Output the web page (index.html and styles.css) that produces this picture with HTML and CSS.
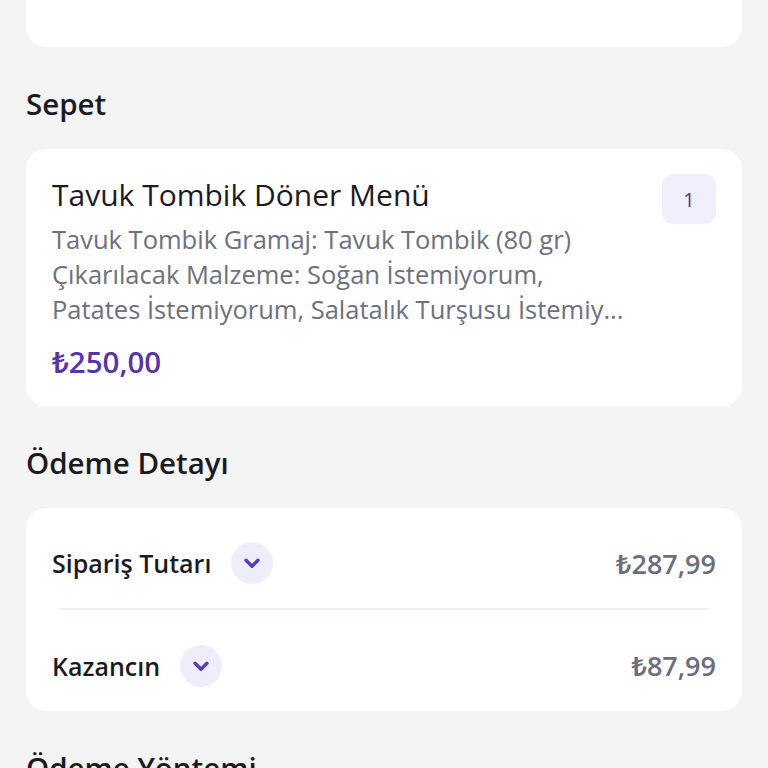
FILE: index.html
```html
<!DOCTYPE html>
<html lang="tr">
<head>
    <meta charset="UTF-8">
    <meta name="viewport" content="width=device-width, initial-scale=1.0">
    <title>Sepet</title>
    <link rel="stylesheet" href="styles.css">
</head>
<body>
    <div class="page">
        <div class="card top-card"></div>

        <h2 class="section-title">Sepet</h2>
        <div class="card item-card">
            <div class="item-info">
                <h3 class="item-name">Tavuk Tombik Döner Menü</h3>
                <p class="item-desc">Tavuk Tombik Gramaj: Tavuk Tombik (80 gr)<br>Çıkarılacak Malzeme: Soğan İstemiyorum,<br>Patates İstemiyorum, Salatalık Turşusu İstemiy...</p>
                <p class="item-price">₺250,00</p>
            </div>
            <div class="qty">1</div>
        </div>

        <h2 class="section-title">Ödeme Detayı</h2>
        <div class="card pay-card">
            <div class="pay-row">
                <span class="pay-label">Sipariş Tutarı</span>
                <span class="toggle">
                    <svg width="22" height="22" viewBox="0 0 24 24"><path d="M5.5 9l6.5 6.5 6.5-6.5" fill="none" stroke="#5a3db4" stroke-width="3.8" stroke-linecap="round" stroke-linejoin="round"/></svg>
                </span>
                <span class="pay-amount">₺287,99</span>
            </div>
            <div class="divider"></div>
            <div class="pay-row last">
                <span class="pay-label">Kazancın</span>
                <span class="toggle">
                    <svg width="22" height="22" viewBox="0 0 24 24"><path d="M5.5 9l6.5 6.5 6.5-6.5" fill="none" stroke="#5a3db4" stroke-width="3.8" stroke-linecap="round" stroke-linejoin="round"/></svg>
                </span>
                <span class="pay-amount">₺87,99</span>
            </div>
        </div>

        <h2 class="section-title">Ödeme Yöntemi</h2>
    </div>
</body>
</html>
```

FILE: styles.css
```css
body {
    margin: 0;
    background-color: #f4f4f5;
    font-family: "Open Sans", "Noto Sans", sans-serif;
    color: #1b1b1f;
    overflow: hidden;
}
.page {
    padding: 0 26px;
    margin-top: -20px;
}
.card {
    background: #ffffff;
    border-radius: 20px;
}
.top-card {
    height: 67px;
}
.section-title {
    margin: 0;
    padding: 38px 0 26px;
    font-size: 29.5px;
    font-weight: 600;
    line-height: 38px;
}
.item-card {
    display: flex;
    justify-content: space-between;
    align-items: flex-start;
    padding: 25px 26px 24px;
}
.item-name {
    margin: 0;
    font-size: 30px;
    font-weight: 400;
    line-height: 42px;
}
.item-desc {
    margin: 6px 0 0;
    font-size: 25.5px;
    line-height: 35px;
    color: #6c7080;
}
.item-price {
    margin: 15px 0 0;
    font-size: 29.5px;
    font-weight: 600;
    line-height: 40px;
    color: #5536a9;
}
.qty {
    width: 54px;
    height: 50px;
    border-radius: 12px;
    background: #f0eefb;
    color: #4a3a9a;
    font-size: 20px;
    display: flex;
    align-items: center;
    justify-content: center;
}
.pay-card {
    padding: 10px 26px 0;
}
.pay-row {
    display: flex;
    align-items: center;
    height: 90px;
}
.pay-row.last {
    height: 91px;
    padding-top: 10px;
}
.pay-label {
    font-size: 25px;
    font-weight: 600;
}
.toggle {
    width: 42px;
    height: 42px;
    border-radius: 50%;
    background: #f0edfb;
    margin-left: 20px;
    display: flex;
    align-items: center;
    justify-content: center;
}
.pay-amount {
    margin-left: auto;
    font-size: 27px;
    font-weight: 600;
    color: #6b6f7d;
}
.divider {
    height: 2px;
    background: #eeedf6;
    margin: 0 8px;
}
```
